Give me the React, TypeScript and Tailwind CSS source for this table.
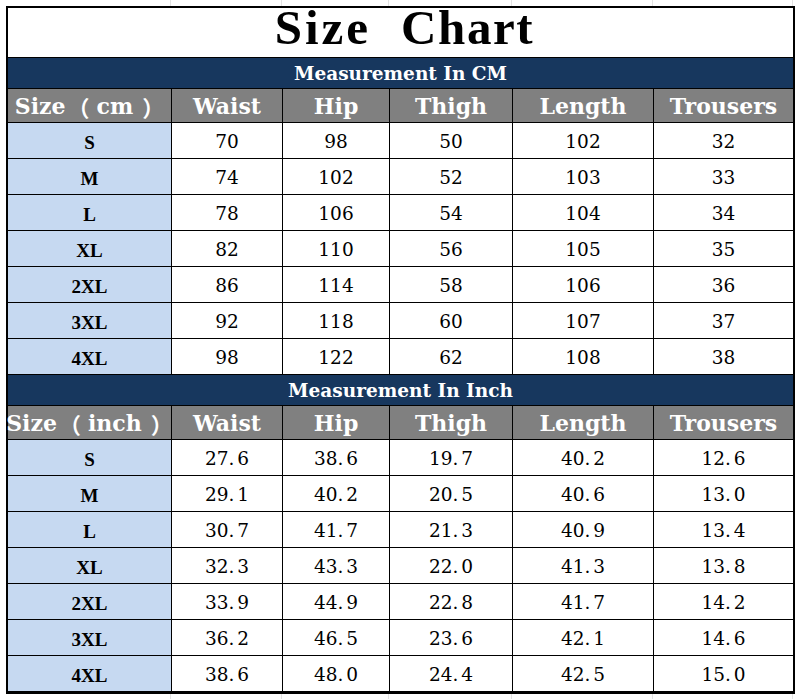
import React from "react";

const cols = "grid grid-cols-[163px_111px_107px_123px_141px_140px]";
const headers = ["Waist", "Hip", "Thigh", "Length", "Trousers"];
const sizes = ["S", "M", "L", "XL", "2XL", "3XL", "4XL"];
const cm = [
  [70, 98, 50, 102, 32],
  [74, 102, 52, 103, 33],
  [78, 106, 54, 104, 34],
  [82, 110, 56, 105, 35],
  [86, 114, 58, 106, 36],
  [92, 118, 60, 107, 37],
  [98, 122, 62, 108, 38],
];
const inch = [
  ["27.6", "38.6", "19.7", "40.2", "12.6"],
  ["29.1", "40.2", "20.5", "40.6", "13.0"],
  ["30.7", "41.7", "21.3", "40.9", "13.4"],
  ["32.3", "43.3", "22.0", "41.3", "13.8"],
  ["33.9", "44.9", "22.8", "41.7", "14.2"],
  ["36.2", "46.5", "23.6", "42.1", "14.6"],
  ["38.6", "48.0", "24.4", "42.5", "15.0"],
];

function Num({ v }: { v: string }) {
  const [a, b] = v.split(".");
  if (b === undefined) return <>{a}</>;
  return (
    <>
      {a}.<span className="ml-[3px]">{b}</span>
    </>
  );
}

function Section({
  title,
  unit,
  rows,
}: {
  title: string;
  unit: string;
  rows: (string | number)[][];
}) {
  return (
    <>
      <div className="h-[31px] bg-[#17375e] border-b border-black flex items-center justify-center text-white font-['DejaVu_Serif',serif] font-bold text-[18.5px] leading-none pt-[3px]">
        {title}
      </div>
      <div className={`${cols} h-[34px] bg-[#808080] border-b border-black`}>
        <div className="flex items-center justify-center text-white font-['DejaVu_Serif',serif] font-bold text-[22px] leading-none whitespace-nowrap">
          Size
          <span className="font-['Noto_Sans_CJK_SC',sans-serif] font-bold ml-[2px] mr-[7px]">（</span>
          {unit}
          <span className="font-['Noto_Sans_CJK_SC',sans-serif] font-bold ml-[9px]">）</span>
        </div>
        {headers.map((h) => (
          <div
            key={h}
            className="border-l border-black flex items-center justify-center text-white font-['DejaVu_Serif',serif] font-bold text-[22px] leading-none"
          >
            {h}
          </div>
        ))}
      </div>
      {rows.map((r, i) => (
        <div key={i} className={`${cols} h-[36px] border-b border-black`}>
          <div className="bg-[#c6d9f1] flex items-center justify-center font-['Liberation_Serif',serif] font-bold text-[19px] leading-none text-black pt-[3px]">
            {sizes[i]}
          </div>
          {r.map((v, j) => (
            <div
              key={j}
              className="border-l border-black flex items-center justify-center font-['DejaVu_Serif',serif] text-[18.5px] leading-none text-black pt-[3px]"
            >
              <Num v={String(v)} />
            </div>
          ))}
        </div>
      ))}
    </>
  );
}

function GridStrip({ h }: { h: string }) {
  return (
    <div className={`${h} pl-[8px] ${cols}`}>
      {[0, 1, 2, 3, 4, 5].map((i) => (
        <div key={i} className="border-r border-[#e3e3e3]" />
      ))}
    </div>
  );
}

export default function App() {
  return (
    <div className="w-[801px] h-[699px] bg-white overflow-hidden flex flex-col">
      <GridStrip h="h-[6px] shrink-0" />
      <div className="ml-[6px] w-[789px] border-2 border-black flex flex-col">
        <div className="h-[50px] border-b border-black flex justify-center items-start">
          <div className="flex gap-[30px] font-['Liberation_Serif',serif] font-bold text-[49px] leading-none mt-[-5px] text-black pl-[8px]">
            <span className="tracking-[3px]">Size</span>
            <span className="tracking-[1.6px]">Chart</span>
          </div>
        </div>
        <Section title="Measurement In CM" unit="cm" rows={cm} />
        <Section title="Measurement In Inch" unit="inch" rows={inch} />
      </div>
      <GridStrip h="flex-1" />
    </div>
  );
}
